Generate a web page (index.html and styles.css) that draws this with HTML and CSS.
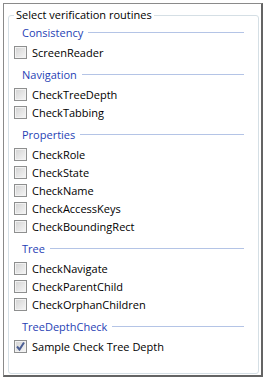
FILE: index.html
```html
<html>
	<head>
		<title>Verification routines</title>
		<meta name="viewport" content="width=device-width, initial-scale=1">
		<link rel="stylesheet" href="styles.css">
	</head>
	<body>
		<div class="frame">
			<fieldset class="group">
				<legend>Select verification routines</legend>

				<div class="section">
					<div class="section-title"><span>Consistency</span></div>
					<label class="check"><span class="box"></span>ScreenReader</label>
				</div>

				<div class="section">
					<div class="section-title"><span>Navigation</span></div>
					<label class="check"><span class="box"></span>CheckTreeDepth</label>
					<label class="check"><span class="box"></span>CheckTabbing</label>
				</div>

				<div class="section">
					<div class="section-title"><span>Properties</span></div>
					<label class="check"><span class="box"></span>CheckRole</label>
					<label class="check"><span class="box"></span>CheckState</label>
					<label class="check"><span class="box"></span>CheckName</label>
					<label class="check"><span class="box"></span>CheckAccessKeys</label>
					<label class="check"><span class="box"></span>CheckBoundingRect</label>
				</div>

				<div class="section">
					<div class="section-title"><span>Tree</span></div>
					<label class="check"><span class="box"></span>CheckNavigate</label>
					<label class="check"><span class="box"></span>CheckParentChild</label>
					<label class="check"><span class="box"></span>CheckOrphanChildren</label>
				</div>

				<div class="section">
					<div class="section-title"><span>TreeDepthCheck</span></div>
					<label class="check"><span class="box checked"><svg width="11" height="11" viewBox="0 0 11 11"><path d="M2 5.5 L4.5 8.5 L9 1.5" fill="none" stroke="#4a5e94" stroke-width="2"/></svg></span>Sample Check Tree Depth</label>
				</div>
			</fieldset>
		</div>
	</body>
</html>
```

FILE: styles.css
```css
*{
	box-sizing: border-box;
}
body{
	margin: 0;
	padding: 0;
	background-color: #fff;
	font-family: "Open Sans", "Noto Sans", sans-serif;
	font-size: 11px;
	color: #000;
}
.frame{
	width: 260px;
	height: 374px;
	margin: 3px 0 0 3px;
	padding: 3px 3px 0 4px;
	border-left: 1px solid #8a8a8a;
	border-top: 1px solid #8a8a8a;
	border-right: 2px solid #646464;
	border-bottom: 2px solid #646464;
	background-color: #fff;
}
.group{
	width: 251px;
	height: 367px;
	margin: 0;
	padding: 0 14px 0 5px;
	border: 1px solid #d5dfe5;
	border-radius: 3px;
}
.group legend{
	margin-left: 0;
	padding: 0 2px;
	line-height: 16px;
}
.section{
	margin-bottom: 4px;
}
.section-title{
	display: flex;
	align-items: center;
	height: 18px;
	margin: 0 0 2px 8px;
	color: #1f3fb5;
}
.section-title::after{
	content: "";
	flex: 1;
	height: 1px;
	margin-left: 5px;
	background-color: #b4c4e6;
}
.check{
	display: flex;
	align-items: center;
	height: 18px;
}
.box{
	display: flex;
	align-items: center;
	justify-content: center;
	width: 13px;
	height: 13px;
	margin-right: 5px;
	border: 1px solid #8e8f8f;
	background: linear-gradient(135deg, #d2d2d2, #f6f6f6);
	box-shadow: inset 0 0 0 1px #f2f2f2;
}
```
